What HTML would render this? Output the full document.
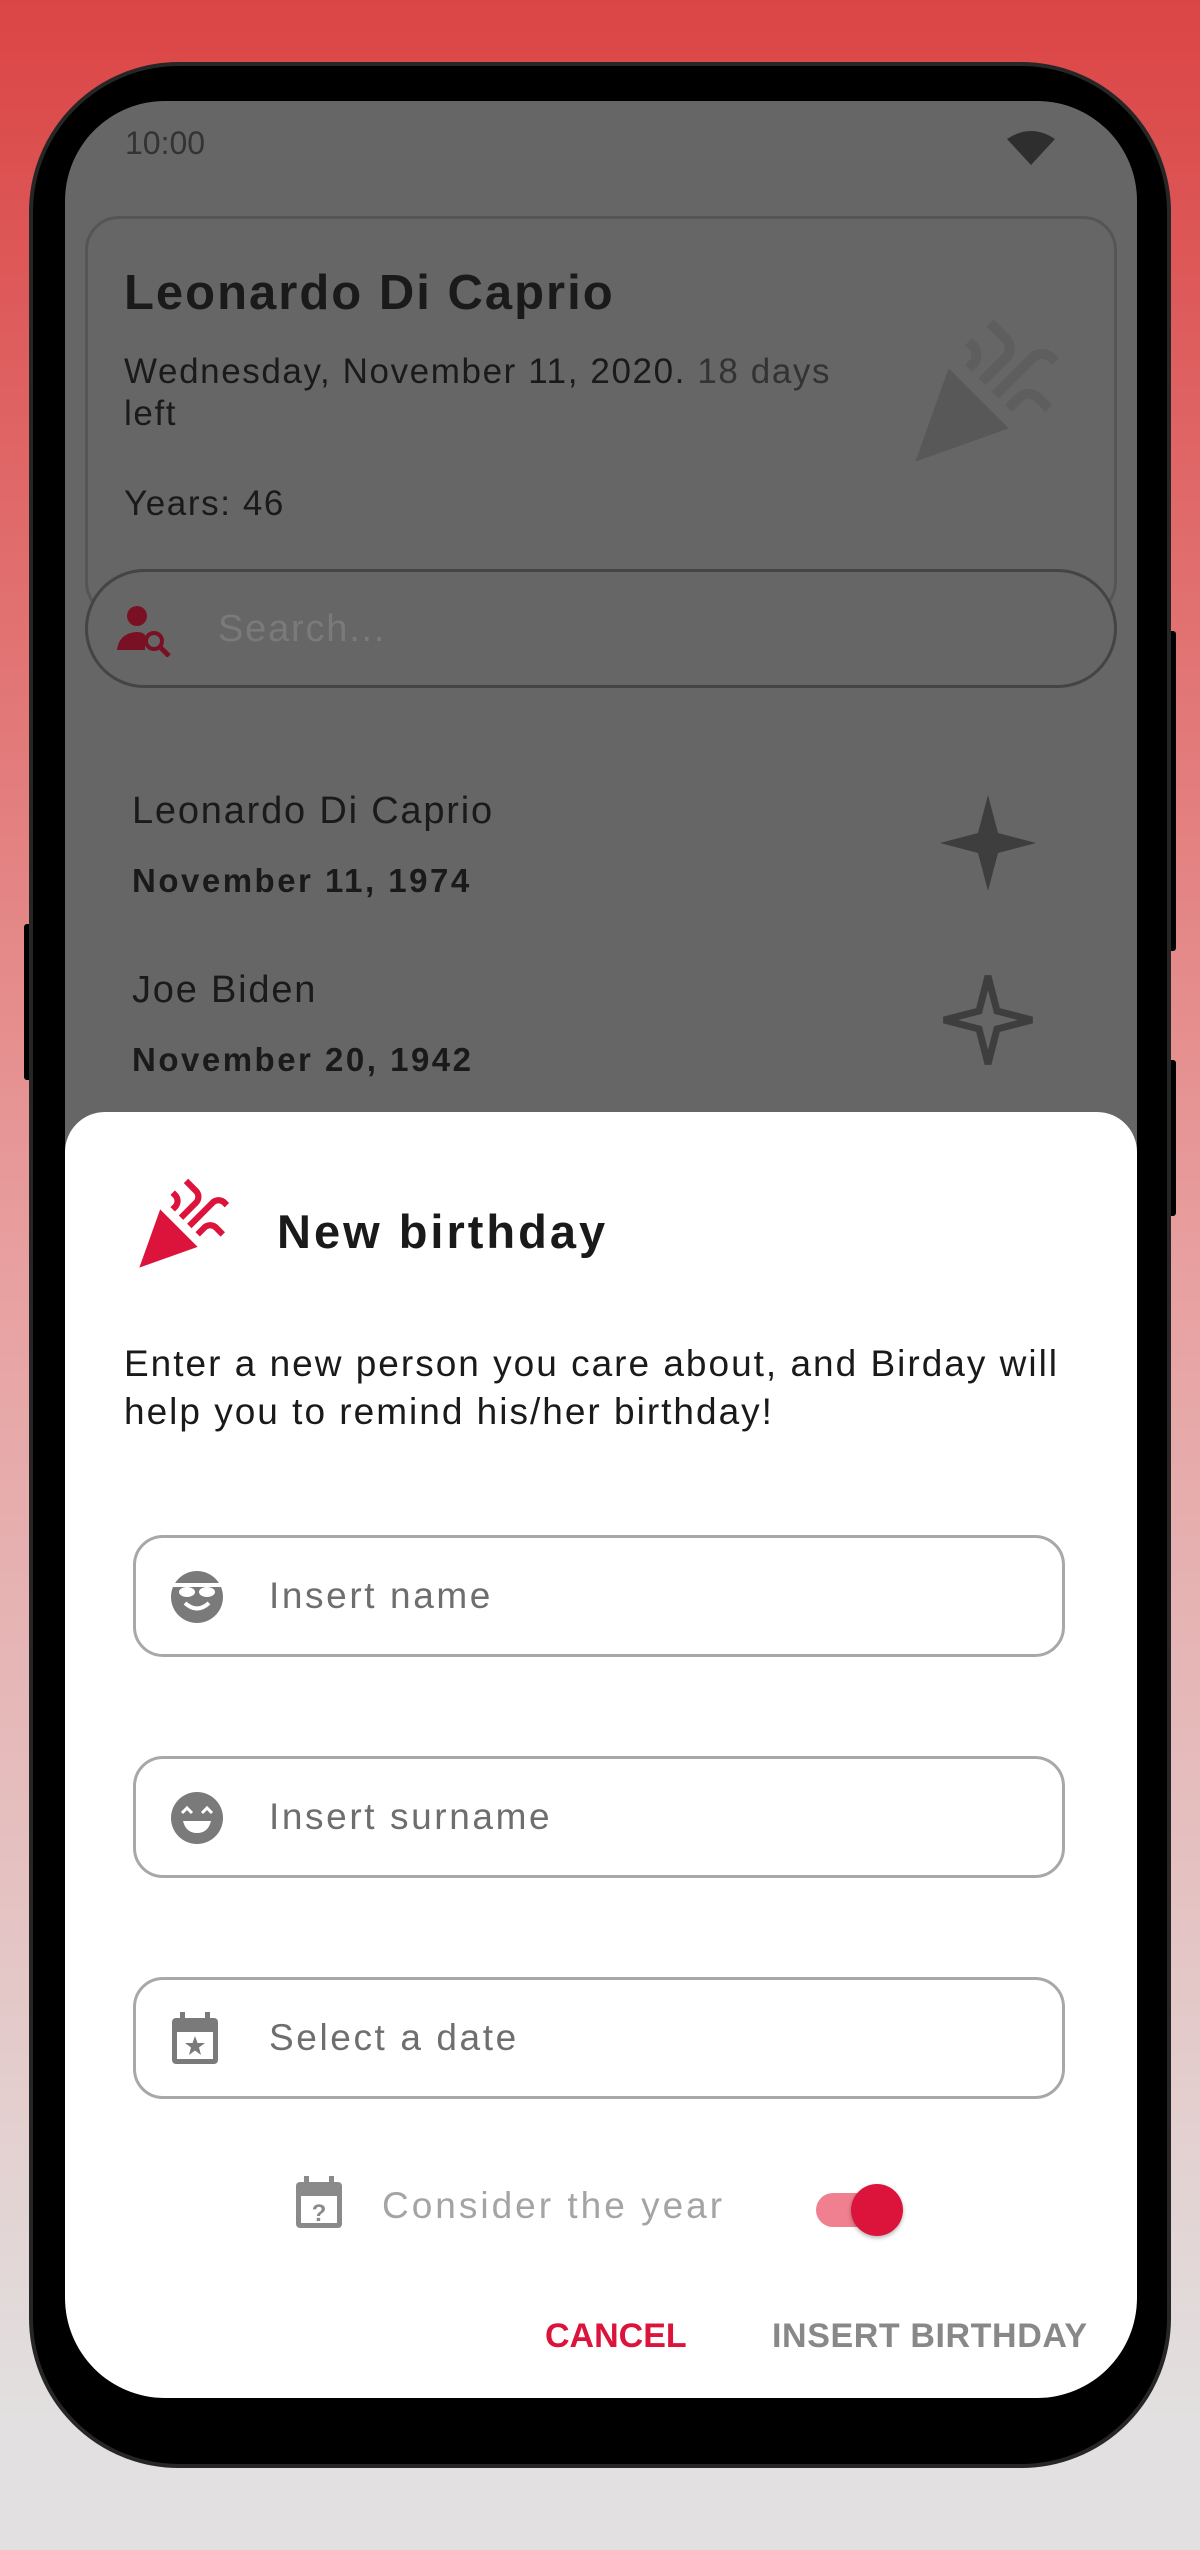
<!DOCTYPE html>
<html><head><meta charset="utf-8"><style>
*{margin:0;padding:0;box-sizing:border-box}
body{width:1200px;height:2550px;overflow:hidden;font-family:"Liberation Sans",sans-serif;background:linear-gradient(#db4545 0%,#e8a0a0 50%,#e2e0e0 95%,#e2e0e0 100%);position:relative}
.abs{position:absolute}
.phone{left:29px;top:62px;width:1142px;height:2406px;background:#000;border-radius:150px;border:4px solid #262626}
.btn{background:#000;border-radius:3px}
.screen{left:65px;top:101px;width:1072px;height:2297px;background:#666;border-radius:100px;overflow:hidden}
.t{position:absolute;white-space:nowrap}
.sheet{left:0;top:1011px;width:1072px;height:1286px;background:#fff;border-radius:40px 40px 100px 100px}
.field{position:absolute;left:68px;width:932px;height:122px;border:3px solid #a8a8a8;border-radius:30px}
.field .ph{position:absolute;left:133px;top:0;line-height:116px;font-size:37px;color:#6e6e6e;letter-spacing:2.6px}
.field svg{position:absolute;left:34px;top:32px}
</style></head><body>
<div class="abs btn" style="left:1166px;top:631px;width:10px;height:320px"></div>
<div class="abs btn" style="left:1166px;top:1060px;width:10px;height:156px"></div>
<div class="abs btn" style="left:24px;top:924px;width:10px;height:156px"></div>
<div class="abs phone"></div>
<div class="abs screen">
  <div class="t" style="left:60px;top:24px;font-size:32px;color:#333">10:00</div>
  <svg class="abs" style="left:940px;top:28px" width="52" height="38" viewBox="0 0 52 38"><path d="M2 10 Q26 -6 50 10 L26 36 Z" fill="#2e2e2e"/></svg>
  <div class="abs" style="left:20px;top:115px;width:1032px;height:400px;border:3px solid #555;border-radius:34px"></div>
  <div class="t" style="left:59px;top:164px;font-size:49px;font-weight:bold;color:#1a1a1a;letter-spacing:2px">Leonardo Di Caprio</div>
  <div class="t" style="left:59px;top:250px;font-size:35px;color:#1a1a1a;line-height:42px;letter-spacing:1.6px">Wednesday, November 11, 2020. <span style="color:#333">18 days</span><br>left</div>
  <div class="t" style="left:59px;top:383px;font-size:35px;color:#1a1a1a;letter-spacing:1.6px">Years: 46</div>
  <svg class="abs" style="left:837px;top:214px" width="160" height="160" viewBox="0 0 24 24"><path fill="#585858" d="M2 22l14-5-9-9z"/><path fill="#5e5e5e" d="M14.53 12.53l5.59-5.59c.49-.49 1.28-.49 1.77 0l.59.59 1.06-1.06-.59-.59c-1.07-1.07-2.82-1.07-3.89 0l-5.59 5.59 1.06 1.06zM10.06 6.88l-.59.59 1.06 1.06.59-.59c1.07-1.07 1.07-2.82 0-3.890l-.59-.59-1.06 1.07.59.59c.48.48.48 1.28 0 1.76zm7 5l-1.59 1.59 1.06 1.06 1.59-1.59c.49-.49 1.28-.49 1.77 0l1.61 1.61 1.06-1.06-1.61-1.61c-1.08-1.07-2.82-1.07-3.89 0zm-2-6l-3.59 3.59 1.06 1.06 3.59-3.59c1.07-1.07 1.07-2.82 0-3.89l-2.39-2.39-1.06 1.06 2.39 2.39c.48.49.48 1.29 0 1.77z"/></svg>
  <div class="abs" style="left:20px;top:468px;width:1032px;height:119px;border:3px solid #444;border-radius:60px;background:#666"></div>
  <svg class="abs" style="left:52px;top:504px" width="56" height="52" viewBox="0 0 56 52"><circle cx="20" cy="11" r="10" fill="#7a1024"/><path d="M0 45 Q2 28 20 27 Q26 27 28 30 L28 45Z" fill="#7a1024"/><circle cx="37" cy="36" r="8" fill="none" stroke="#7a1024" stroke-width="4"/><path d="M42 41 L52 51" stroke="#7a1024" stroke-width="5"/></svg>
  <div class="t" style="left:153px;top:507px;font-size:38px;color:#7a7a7a;letter-spacing:1.8px">Search...</div>
  <div class="t" style="left:67px;top:689px;font-size:38px;color:#1a1a1a;letter-spacing:1.8px">Leonardo Di Caprio</div>
  <div class="t" style="left:67px;top:761px;font-size:33px;font-weight:bold;color:#1a1a1a;letter-spacing:2.5px">November 11, 1974</div>
  <svg class="abs" style="left:875px;top:694px" width="96" height="96" viewBox="0 0 96 96"><path d="M48 0 L58 38 L96 48 L58 58 L48 96 L38 58 L0 48 L38 38Z" fill="#3e3e3e"/></svg>
  <div class="t" style="left:67px;top:868px;font-size:38px;color:#1a1a1a;letter-spacing:1.8px">Joe Biden</div>
  <div class="t" style="left:67px;top:940px;font-size:33px;font-weight:bold;color:#1a1a1a;letter-spacing:2.5px">November 20, 1942</div>
  <svg class="abs" style="left:875px;top:871px" width="96" height="96" viewBox="0 0 96 96"><path d="M48 4 L57 39 L92 48 L57 57 L48 92 L39 57 L4 48 L39 39Z" fill="none" stroke="#3e3e3e" stroke-width="7" stroke-linejoin="miter"/></svg>

  <div class="abs sheet">
    <svg class="abs" style="left:66px;top:64px" width="100" height="100" viewBox="0 0 24 24"><path fill="#dc143c" d="M2 22l14-5-9-9zm12.53-9.47l5.59-5.59c.49-.49 1.28-.49 1.77 0l.59.59 1.06-1.06-.59-.59c-1.07-1.07-2.82-1.07-3.89 0l-5.59 5.59 1.06 1.06zM10.06 6.88l-.59.59 1.06 1.06.59-.59c1.07-1.07 1.07-2.82 0-3.89l-.59-.59-1.06 1.07.59.59c.48.48.48 1.28 0 1.76zm7 5l-1.59 1.59 1.06 1.06 1.59-1.59c.49-.49 1.28-.49 1.77 0l1.61 1.61 1.06-1.06-1.61-1.61c-1.08-1.07-2.82-1.07-3.89 0zm-2-6l-3.59 3.59 1.06 1.06 3.59-3.59c1.07-1.07 1.07-2.82 0-3.89l-2.39-2.39-1.06 1.06 2.39 2.39c.48.49.48 1.29 0 1.77z"/></svg>
    <div class="t" style="left:212px;top:92px;font-size:47px;font-weight:bold;color:#1a1a1a;letter-spacing:3px">New birthday</div>
    <div class="t" style="left:59px;top:228px;font-size:37px;line-height:48px;color:#1a1a1a;letter-spacing:2px">Enter a new person you care about, and Birday will<br>help you to remind his/her birthday!</div>
    <div class="field" style="top:423px">
      <svg width="54" height="54" viewBox="0 0 54 54"><circle cx="27" cy="27" r="26" fill="#7a7a7a"/><path d="M3 15 L51 15" stroke="#fff" stroke-width="4"/><ellipse cx="17" cy="22" rx="8" ry="5" fill="#fff"/><ellipse cx="37" cy="22" rx="8" ry="5" fill="#fff"/><path d="M15 33 Q27 44 39 33" fill="none" stroke="#fff" stroke-width="4"/></svg>
      <div class="ph">Insert name</div></div>
    <div class="field" style="top:644px">
      <svg width="54" height="54" viewBox="0 0 54 54"><circle cx="27" cy="27" r="26" fill="#7a7a7a"/><path d="M12 22 L17 17 L22 22 M32 22 L37 17 L42 22" fill="none" stroke="#fff" stroke-width="3"/><path d="M13 30 L41 30 Q38 42 27 42 Q16 42 13 30Z" fill="#fff"/></svg>
      <div class="ph">Insert surname</div></div>
    <div class="field" style="top:865px">
      <svg width="50" height="54" viewBox="0 0 50 54"><rect x="2" y="6" width="46" height="46" rx="4" fill="#7a7a7a"/><rect x="10" y="0" width="5" height="10" fill="#7a7a7a"/><rect x="35" y="0" width="5" height="10" fill="#7a7a7a"/><rect x="7" y="20" width="36" height="27" fill="#fff"/><path d="M25 24 L27.5 31 L35 31 L29 35.5 L31 43 L25 38.5 L19 43 L21 35.5 L15 31 L22.5 31Z" fill="#7a7a7a"/></svg>
      <div class="ph">Select a date</div></div>
    <svg class="abs" style="left:229px;top:1064px" width="50" height="54" viewBox="0 0 50 54"><rect x="2" y="6" width="46" height="46" rx="4" fill="#8a8a8a"/><rect x="10" y="0" width="5" height="10" fill="#8a8a8a"/><rect x="35" y="0" width="5" height="10" fill="#8a8a8a"/><rect x="7" y="20" width="36" height="27" fill="#fff"/><text x="25" y="45" font-size="24" font-weight="bold" text-anchor="middle" fill="#8a8a8a" font-family="Liberation Sans">?</text></svg>
    <div class="t" style="left:317px;top:1073px;font-size:37px;color:#a4a4a4;letter-spacing:3px">Consider the year</div>
    <div class="abs" style="left:751px;top:1081px;width:70px;height:34px;border-radius:17px;background:#f08090"></div>
    <div class="abs" style="left:786px;top:1072px;width:52px;height:52px;border-radius:50%;background:#dc143c;box-shadow:0 2px 4px rgba(0,0,0,.3)"></div>
    <div class="t" style="left:480px;top:1205px;font-size:34px;font-weight:bold;color:#dc143c">CANCEL</div>
    <div class="t" style="left:707px;top:1205px;font-size:34px;font-weight:bold;color:#888;letter-spacing:0.6px">INSERT BIRTHDAY</div>
  </div>
</div>
</body></html>
